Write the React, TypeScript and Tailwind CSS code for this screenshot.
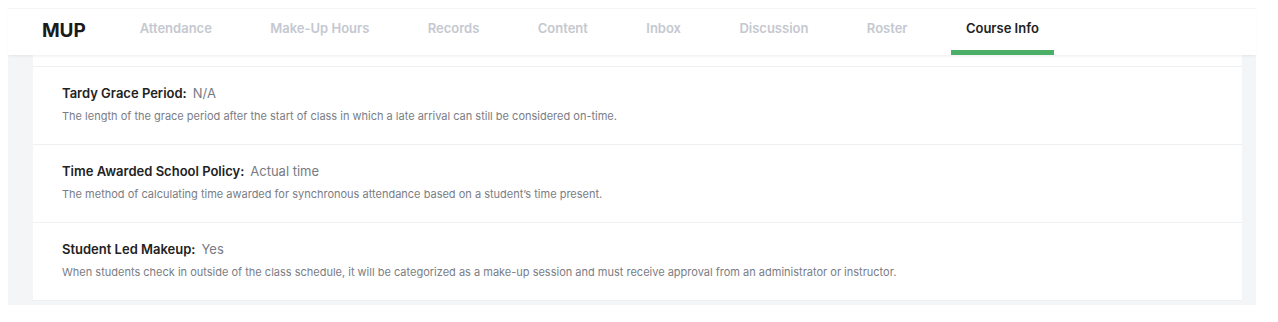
const tabs = [
  "Attendance",
  "Make-Up Hours",
  "Records",
  "Content",
  "Inbox",
  "Discussion",
  "Roster",
  "Course Info",
];

const rows = [
  {
    label: "Tardy Grace Period:",
    value: "N/A",
    help: "The length of the grace period after the start of class in which a late arrival can still be considered on-time.",
  },
  {
    label: "Time Awarded School Policy:",
    value: "Actual time",
    help: "The method of calculating time awarded for synchronous attendance based on a student’s time present.",
  },
  {
    label: "Student Led Makeup:",
    value: "Yes",
    help: "When students check in outside of the class schedule, it will be categorized as a make-up session and must receive approval from an administrator or instructor.",
  },
];

export default function App() {
  return (
    <div className="w-[1278px] h-[322px] bg-white font-['Inter',sans-serif] overflow-hidden">
      <div className="ml-2 mt-2 w-[1248px] h-[297px] bg-[#f4f5f7]">
        {/* Top nav */}
        <header className="relative z-10 h-[47px] bg-white border-t border-[#f4f5f6] shadow-[0_2px_3px_-1px_rgba(0,0,0,0.07)] flex items-stretch pl-[34px]">
          <div className="pt-[8px] text-[19px] font-bold text-[#1a1a1a] tracking-[-0.1px] mr-[39px]">MUP</div>
          <nav className="flex gap-[28.4px]">
            {tabs.map((t) => {
              const active = t === "Course Info";
              return (
                <div
                  key={t}
                  className={
                    "px-[15px] pt-[12px] text-[13px] leading-[14px] font-semibold border-b-[5px] " +
                    (active ? "border-[#4caf67] text-[#222]" : "border-transparent text-[#c5c8d0]")
                  }
                >
                  {t}
                </div>
              );
            })}
          </nav>
        </header>

        {/* Settings card */}
        <div className="ml-[25px] mr-[14px] bg-white">
          <div className="h-[12px] border-b border-[#eff0f2]" />
          {rows.map((r) => (
            <div key={r.label} className="h-[78px] border-b border-[#eff0f2] pl-[29px] pt-[18px]">
              <div className="text-[13px] leading-[16px]">
                <span className="font-semibold text-[#222]">{r.label}</span>
                <span className="ml-[6px] text-[#777b84]">{r.value}</span>
              </div>
              <div className="mt-[8px] text-[11px] leading-[14px] text-[#7a7d85]">{r.help}</div>
            </div>
          ))}
        </div>
      </div>
    </div>
  );
}
